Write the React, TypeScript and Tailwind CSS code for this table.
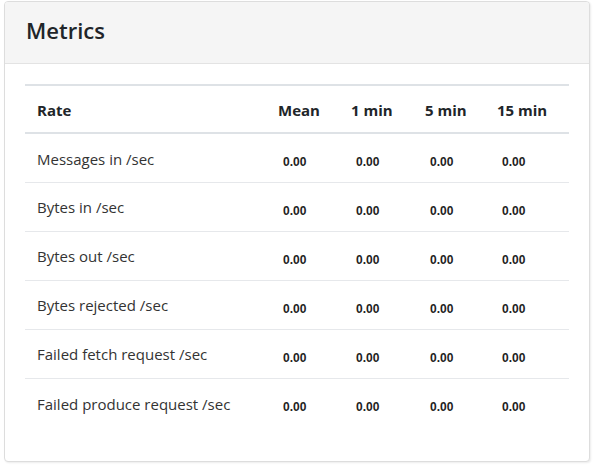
import { FC } from "react";

interface MetricRow {
  label: string;
  mean: string;
  oneMin: string;
  fiveMin: string;
  fifteenMin: string;
}

const rows: MetricRow[] = [
  { label: "Messages in /sec", mean: "0.00", oneMin: "0.00", fiveMin: "0.00", fifteenMin: "0.00" },
  { label: "Bytes in /sec", mean: "0.00", oneMin: "0.00", fiveMin: "0.00", fifteenMin: "0.00" },
  { label: "Bytes out /sec", mean: "0.00", oneMin: "0.00", fiveMin: "0.00", fifteenMin: "0.00" },
  { label: "Bytes rejected /sec", mean: "0.00", oneMin: "0.00", fiveMin: "0.00", fifteenMin: "0.00" },
  { label: "Failed fetch request /sec", mean: "0.00", oneMin: "0.00", fiveMin: "0.00", fifteenMin: "0.00" },
  { label: "Failed produce request /sec", mean: "0.00", oneMin: "0.00", fiveMin: "0.00", fifteenMin: "0.00" },
];

const Value: FC<{ v: string }> = ({ v }) => (
  <td className="px-3 pt-[4px] align-middle">
    <span className="pl-[5px] font-['Liberation_Sans',Arial,sans-serif] text-[12px] font-bold text-[#222]">
      {v}
    </span>
  </td>
);

const App: FC = () => {
  return (
    <div className="h-[466px] w-[594px] bg-white pl-1 pr-1 pt-px font-['Open_Sans',sans-serif] text-[#333]">
      <div className="flex h-[461px] flex-col overflow-hidden rounded border border-[#ddd] bg-white shadow-[1px_1px_2px_rgba(0,0,0,0.08)]">
        <div className="flex h-[62px] items-center border-b border-[#e3e3e3] bg-[#f5f5f5] px-[21px] pb-[4px]">
          <h2 className="text-[22px] font-semibold text-[#212529]">Metrics</h2>
        </div>
        <div className="px-[20px] pt-[20px]">
          <table className="w-full border-collapse border-t-2 border-[#dee2e6] text-left">
            <colgroup>
              <col className="w-[241px]" />
              <col className="w-[73px]" />
              <col className="w-[74px]" />
              <col className="w-[72px]" />
              <col />
            </colgroup>
            <thead>
              <tr className="h-[48px] border-b-2 border-[#dee2e6]">
                <th className="px-3 pt-[2px] text-[15px] font-bold text-[#212529]">Rate</th>
                <th className="px-3 pt-[2px] text-[15px] font-bold text-[#212529]">Mean</th>
                <th className="px-3 pt-[2px] text-[15px] font-bold text-[#212529]">1 min</th>
                <th className="px-3 pt-[2px] text-[15px] font-bold text-[#212529]">5 min</th>
                <th className="px-3 pt-[2px] text-[15px] font-bold text-[#212529]">15 min</th>
              </tr>
            </thead>
            <tbody>
              {rows.map((r, i) => (
                <tr
                  key={r.label}
                  className={
                    i < rows.length - 1
                      ? "h-[49px] border-b border-[#e6e8eb]"
                      : "h-[49px]"
                  }
                >
                  <td className="px-3 pt-[2px] text-[15px] text-[#333]">{r.label}</td>
                  <Value v={r.mean} />
                  <Value v={r.oneMin} />
                  <Value v={r.fiveMin} />
                  <Value v={r.fifteenMin} />
                </tr>
              ))}
            </tbody>
          </table>
        </div>
      </div>
    </div>
  );
};

export default App;
